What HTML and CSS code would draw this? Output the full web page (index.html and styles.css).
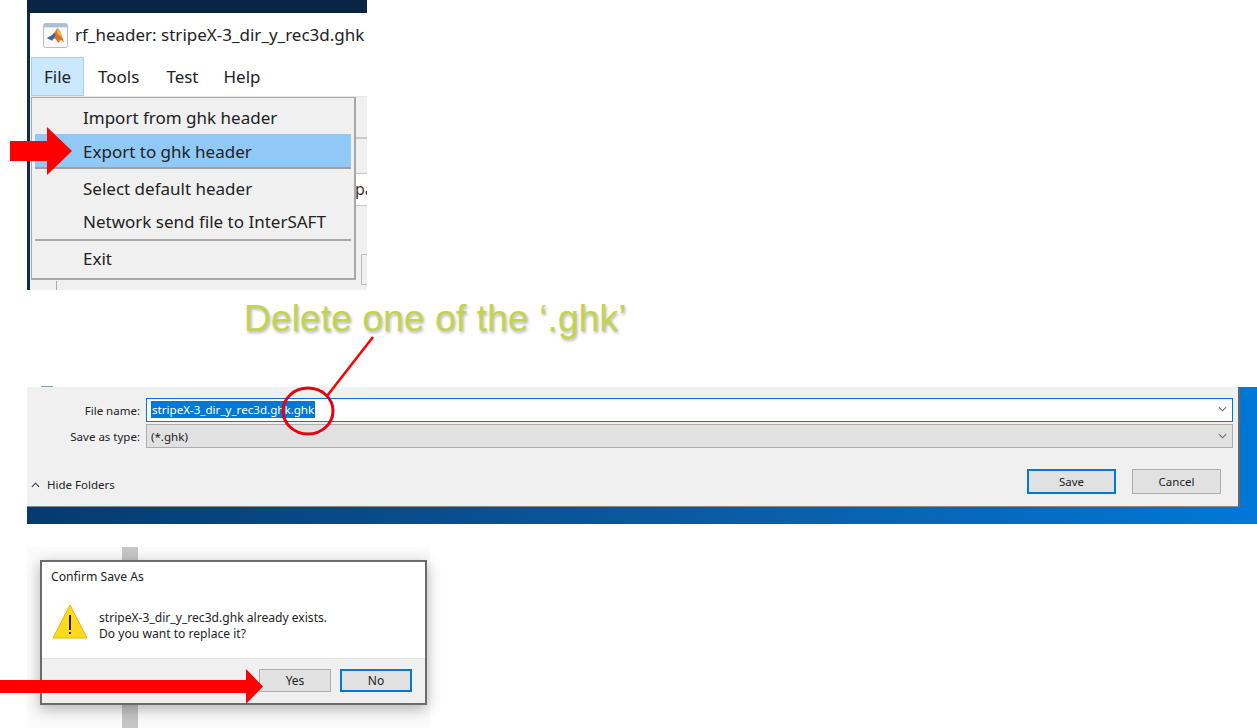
FILE: index.html
```html
<!DOCTYPE html>
<html lang="en">
<head>
<meta charset="utf-8">
<title>Export to ghk header</title>
<link rel="stylesheet" href="styles.css">
</head>
<body>
<main class="slide">

  <section class="shot shot-menu">
    <div class="win-top"></div>
    <div class="win">
      <div class="titlebar">
        <svg class="app-icon" viewBox="0 0 26 26" aria-hidden="true">
          <rect x="0.5" y="0.5" width="25" height="25" rx="2" fill="#fafafa" stroke="#b8b8b8"/>
          <rect x="1" y="1" width="24" height="3.500" fill="#a8bfd6"/>
          <path d="M4 15.500l5-2.500 3-3 3-5 3 4 4 11-3.500-2.500-2.500 3-3.500-4.500-2 .5z" fill="#e2702a"/>
          <path d="M4 15.500l5-2.500 3-3 1 3-3.500 5.500z" fill="#2a6aa6"/>
          <path d="M15 5l3 4 2 6-4-3-1.500-2z" fill="#f3b63e"/>
        </svg>
        <span class="title-text">rf_header: stripeX-3_dir_y_rec3d.ghk</span>
      </div>
      <nav class="menubar">
        <span class="menu-item is-open">File</span>
        <span class="menu-item">Tools</span>
        <span class="menu-item">Test</span>
        <span class="menu-item">Help</span>
      </nav>
      <div class="win-body">
        <div class="stub stub-line-a"></div>
        <div class="stub stub-input">pa</div>
        <div class="stub stub-box"></div>
        <div class="stub stub-btn"></div>
        <div class="stub stub-left"></div>
      </div>
      <div class="dropdown">
        <div class="drop-row">Import from ghk header</div>
        <div class="drop-row is-hover">Export to ghk header</div>
        <div class="drop-row">Select default header</div>
        <div class="drop-row">Network send file to InterSAFT</div>
        <div class="drop-sep"></div>
        <div class="drop-row">Exit</div>
      </div>
    </div>
  </section>

  <p class="callout">Delete one of the ‘.ghk’</p>

  <section class="shot shot-save">
    <div class="sliver"></div>
    <div class="save-main">
      <div class="save-rows">
        <div class="form-row">
          <span class="form-label">File name:</span>
          <div class="field field-active">
            <span class="selected">stripeX-3_dir_y_rec3d.ghk.ghk</span>
            <svg class="chev" viewBox="0 0 10 6" aria-hidden="true"><path d="M1 1l4 4 4-4" fill="none" stroke="#6a6a6a" stroke-width="1.2"/></svg>
          </div>
        </div>
        <div class="form-row">
          <span class="form-label">Save as type:</span>
          <div class="field field-grey">
            <span>(*.ghk)</span>
            <svg class="chev" viewBox="0 0 10 6" aria-hidden="true"><path d="M1 1l4 4 4-4" fill="none" stroke="#6a6a6a" stroke-width="1.2"/></svg>
          </div>
        </div>
      </div>
      <div class="save-foot">
        <div class="hide-folders">
          <svg class="chev-up" viewBox="0 0 10 6" aria-hidden="true"><path d="M1 5l4-4 4 4" fill="none" stroke="#333" stroke-width="1.2"/></svg>
          <span>Hide Folders</span>
        </div>
        <div class="save-btns">
          <span class="btn btn-save btn-primary">Save</span>
          <span class="btn btn-save">Cancel</span>
        </div>
      </div>
    </div>
    <div class="desktop"></div>
  </section>

  <section class="shot shot-confirm">
    <div class="pole"></div>
    <div class="dialog">
      <div class="dialog-title">Confirm Save As</div>
      <div class="dialog-body">
        <svg class="warn" viewBox="0 0 36 35" aria-hidden="true">
          <path d="M18 1L35 34H1z" fill="#ffd91a" stroke="#e5b400" stroke-width="1"/>
          <rect x="17" y="11" width="2" height="15" fill="#222"/>
          <rect x="17" y="28" width="2" height="2" fill="#222"/>
        </svg>
        <div class="dialog-msg">
          <div>stripeX-3_dir_y_rec3d.ghk already exists.</div>
          <div>Do you want to replace it?</div>
        </div>
      </div>
      <div class="dialog-foot">
        <span class="btn btn-dlg">Yes</span>
        <span class="btn btn-dlg btn-primary">No</span>
      </div>
    </div>
  </section>

  <svg class="overlay" viewBox="0 0 1257 728" aria-hidden="true">
    <polygon points="10,141 47,141 47,127 72,151 47,175 47,161 10,161" fill="#ff0000"/>
    <polygon points="0,680 246,680 246,669 263,686.500 246,704 246,693 0,693" fill="#ff0000"/>
    <line x1="373" y1="337" x2="327" y2="396" stroke="#ff0000" stroke-width="2.500"/>
    <ellipse cx="308" cy="411" rx="25" ry="23" fill="none" stroke="#e8000f" stroke-width="3"/>
  </svg>
</main>
</body>
</html>
```
FILE: styles.css
```css
* { box-sizing: border-box; }
html, body { margin: 0; padding: 0; background: #fff; }
body { font-family: "Noto Sans", "Open Sans", sans-serif; color: #1a1a1a; }
.slide { position: relative; width: 1257px; height: 728px; overflow: hidden; background: #fff; }
.shot { position: absolute; }
.overlay { position: absolute; left: 0; top: 0; width: 1257px; height: 728px; pointer-events: none; }

/* top: MATLAB window with File menu */
.shot-menu { left: 27px; top: 0; width: 340px; height: 290px; overflow: hidden; display: flex; flex-direction: column; }
.win-top { height: 13px; background: #0a2444; flex: none; }
.win { position: relative; flex: 1; background: #fff; border-left: 3px solid #0f2a4a; }
.titlebar { height: 44px; display: flex; align-items: center; padding-left: 13px; gap: 7px; }
.app-icon { width: 25px; height: 25px; flex: none; }
.title-text { font-size: 17px; white-space: nowrap; color: #222; position: relative; top: -1px; }
.menubar { height: 40px; display: flex; align-items: stretch; padding-left: 1px; border-bottom: 1px solid #e8e8e8; }
.menu-item { font-size: 17px; display: flex; align-items: center; padding: 0 13px; color: #222; border: 1px solid transparent; }
.menu-item.is-open { background: #cce8ff; border-color: #99d1ff; padding: 0 12px; width: 53px; }
.menu-item:nth-child(3) { padding-left: 12px; }
.menu-item:nth-child(4) { padding-left: 10px; }
.win-body { position: relative; height: 193px; background: #f0f0f0; }
.stub { position: absolute; }
.stub-line-a { left: 325px; top: 40px; width: 12px; height: 2px; background: #c8c8c8; }
.stub-input { left: 325px; top: 76px; width: 12px; height: 33px; background: #fff; border-top: 1px solid #c8c8c8; border-bottom: 1px solid #c8c8c8; font-size: 16px; line-height: 30px; overflow: hidden; color: #333; }
.stub-box { left: 331px; top: 157px; width: 10px; height: 31px; background: #f0f0f0; border: 1px solid #bbb; }
.stub-btn { left: 176px; top: 178px; width: 75px; height: 5px; border: 1px solid #aaa; border-top: none; }
.stub-left { left: 26px; top: 184px; width: 1px; height: 9px; background: #aaa; }
.dropdown { position: absolute; left: 1px; top: 84px; width: 325px; height: 183px; background: #f0f0f0; border: 2px solid #a8a8a8; border-top-width: 1px; border-left-width: 1px; padding: 3px 3px 0; }
.drop-row { height: 33px; display: flex; align-items: center; padding-left: 48px; font-size: 17px; color: #222; white-space: nowrap; }
.drop-row.is-hover { height: 35px; background: #90c8f6; border-bottom: 2px solid #a0a0a0; margin-bottom: 3px; padding-top: 2px; }
.drop-sep { height: 2px; background: #a8a8a8; margin: 1px 0 1px; }

/* callout */
.callout { position: absolute; left: 244px; top: 296px; margin: 0; font-family: "Liberation Sans", Arial, sans-serif; font-size: 37.400px; line-height: 44px; color: #c3d350; white-space: nowrap; text-shadow: 1px 2px 3px rgba(90,90,90,.45); }

/* middle: Save As dialog */
.shot-save { left: 27px; top: 387px; width: 1230px; height: 137px; display: flex; flex-direction: column; background: linear-gradient(90deg, #063a6e 0%, #0a5ea8 60%, #0078d7 100%); }
.sliver { position: absolute; left: 14px; top: -1px; width: 12px; height: 1px; background: #7aa6cc; }
.save-main { width: 1213px; height: 120px; background: #f0f0f0; border-right: 2px solid #666; border-bottom: 1px solid #888; display: flex; flex-direction: column; }
.save-rows { padding: 11px 5px 0 0; display: flex; flex-direction: column; gap: 2px; }
.form-row { display: flex; align-items: center; }
.form-label { width: 119px; text-align: right; padding-right: 6px; font-size: 11.500px; color: #222; flex: none; }
.field { flex: 1; height: 24px; display: flex; align-items: center; justify-content: space-between; padding: 0 5px 0 4px; font-size: 11.600px; }
.field-active { background: #fff; border: 1px solid #0078d7; padding-bottom: 2px; }
.field-grey { background: #e1e1e1; border: 1px solid #adadad; color: #222; }
.selected { background: #0078d7; color: #fff; padding: 1px 1px; }
.chev { width: 9px; height: 6px; flex: none; }
.save-foot { flex: 1; display: flex; align-items: flex-start; justify-content: space-between; padding: 21px 17px 0 4px; }
.hide-folders { display: flex; align-items: center; gap: 7px; font-size: 11.500px; color: #222; padding-top: 8px; }
.chev-up { width: 9px; height: 6px; }
.save-btns { display: flex; gap: 16px; }
.btn { display: flex; align-items: center; justify-content: center; background: #e1e1e1; border: 1px solid #adadad; color: #222; }
.btn-save { width: 89px; height: 25px; font-size: 11.500px; }
.btn-primary { border: 2px solid #0078d7; }
.desktop { flex: 1; }

/* bottom: Confirm dialog */
.shot-confirm { left: 27px; top: 547px; width: 403px; height: 181px; background: #fbfbfb; }
.pole { position: absolute; left: 95px; top: 0; width: 16px; height: 181px; background: #c6c6c6; }
.dialog { position: absolute; left: 13px; top: 13px; width: 387px; height: 145px; background: #fff; border: 2px solid #6b6b6b; box-shadow: 0 4px 14px rgba(0,0,0,.3); display: flex; flex-direction: column; }
.dialog-title { padding: 6px 0 0 9px; font-size: 12.200px; height: 30px; color: #222; }
.dialog-body { flex: 1; display: flex; align-items: flex-start; padding: 12px 0 0 10px; gap: 11px; }
.warn { width: 36px; height: 35px; flex: none; }
.dialog-msg { font-size: 12.100px; line-height: 16px; color: #222; padding-top: 6px; }
.dialog-foot { height: 45px; background: #f0f0f0; border-top: 1px solid #e3e3e3; display: flex; justify-content: flex-end; align-items: flex-start; gap: 9px; padding: 10px 13px 0 0; }
.btn-dlg { width: 72px; height: 23px; font-size: 12px; }
```
